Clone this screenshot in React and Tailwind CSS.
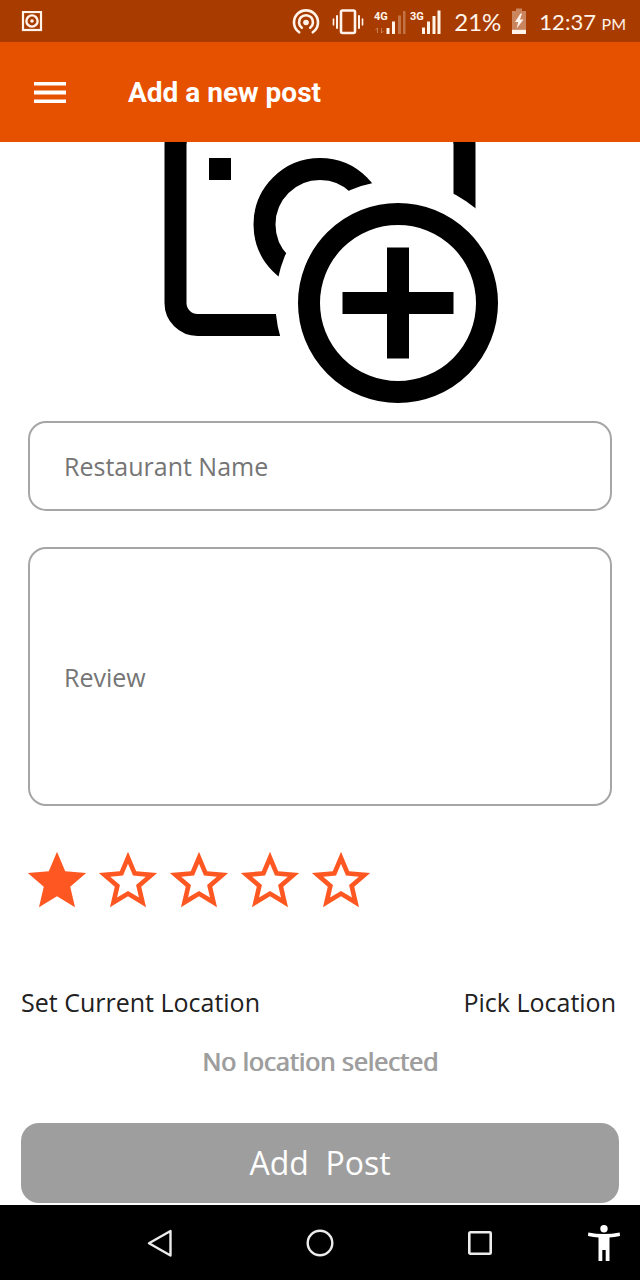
import { useState } from "react";

const STAR_FULL =
  "M12 17.27L18.18 21l-1.64-7.03L22 9.24l-7.19-.61L12 2 9.19 8.63 2 9.24l5.46 4.73L5.82 21z";
const STAR_EMPTY =
  "M22 9.24l-7.19-.62L12 2 9.19 8.63 2 9.24l5.46 4.73L5.82 21 12 17.27 18.18 21l-1.63-7.03L22 9.24zM12 15.4l-3.76 2.27 1-4.28-3.32-2.88 4.38-.38L12 6.1l1.71 4.04 4.38.38-3.32 2.88 1 4.28L12 15.4z";

function StatusBar() {
  return (
    <div className="flex h-[42px] items-center bg-[#a83c00] pl-[21px] pr-3.5 pt-0.5 text-[#fff3ea]">
      <svg width="22" height="22" viewBox="0 0 22 22" fill="none" stroke="currentColor" aria-hidden="true">
        <rect x="2" y="1" width="18" height="18" strokeWidth="2.200" />
        <circle cx="11" cy="10" r="5.600" strokeWidth="2.400" />
        <circle cx="11" cy="10" r="1.800" fill="currentColor" stroke="none" />
      </svg>
      <div className="ml-auto flex items-center">
        <svg width="28" height="28" viewBox="0 0 28 28" fill="none" stroke="currentColor" strokeWidth="2.600" strokeLinecap="round" aria-hidden="true">
          <path d="M7.200 24.300A12 12 0 1 1 20.800 24.300" />
          <path d="M9.800 19.800A7 7 0 1 1 18.200 19.800" />
          <circle cx="14" cy="14.500" r="2.800" fill="currentColor" stroke="none" />
        </svg>
        <svg className="ml-3" width="32" height="28" viewBox="0 0 32 28" fill="none" stroke="currentColor" strokeWidth="2" strokeLinecap="round" aria-hidden="true">
          <rect x="9" y="2.500" width="14" height="22.500" rx="1.500" strokeWidth="2.600" />
          <path d="M5 8v12M27 8v12" />
          <path d="M1.500 11v6M30.500 11v6" strokeWidth="1.600" />
        </svg>
        <svg className="ml-2.5" width="68" height="28" viewBox="0 0 68 28" fill="currentColor" aria-label="Signal strength">
          <text x="0" y="12" fontSize="11" className="font-['Roboto',sans-serif] font-bold">4G</text>
          <path d="M12.500 20h3v6h-3zM18 13.500h3v12.500h-3z" />
          <path d="M24 7.500h3v18.500h-3zM29 3h2.500v23h-2.500z" opacity=".3" />
          <path d="M3.500 20v5M1.500 22l2-2M7.500 20v5l2-2" fill="none" stroke="currentColor" strokeWidth="1" opacity=".35" />
          <text x="36" y="12" fontSize="11" className="font-['Roboto',sans-serif] font-bold">3G</text>
          <path d="M48 19.500h3v6.500h-3zM53 13.500h3v12.500h-3zM58.500 8h3v18h-3zM63.500 2.500h3v23.500h-3z" />
        </svg>
        <span className="ml-3 font-['Lato',sans-serif] text-[24px] leading-none">21%</span>
        <svg className="ml-2.5" width="16" height="28" viewBox="0 0 16 28" fill="currentColor" aria-label="Charging">
          <path d="M1 3h4V.5h6V3h4v18H1z" opacity=".4" />
          <path d="M1 21.500h14V26H1z" />
          <path d="M9.500 5.500L4 14h3.200l-1.500 6.500 6.800-9H9L11 5.500z" />
        </svg>
        <span className="ml-3 font-['Lato',sans-serif] text-[22px] leading-none">
          12:37 <span className="text-[16px]">PM</span>
        </span>
      </div>
    </div>
  );
}

function AppBar() {
  return (
    <header className="flex h-[100px] items-center bg-[#e65100] px-8 pt-0.5 text-white">
      <button type="button" aria-label="Open menu" className="flex">
        <svg width="36" height="36" viewBox="0 0 36 36" fill="currentColor" aria-hidden="true">
          <path d="M2 7h32v3.500H2zM2 15.500h32v4H2zM2 24.500h32v3.500H2z" />
        </svg>
      </button>
      <h1 className="ml-[60px] font-['Roboto',sans-serif] text-[28px] font-bold leading-8">Add a new post</h1>
    </header>
  );
}

function AddPhotoIcon() {
  return (
    <svg width="356" height="261" viewBox="142 142 356 261" fill="none" stroke="#000" strokeWidth="22" aria-hidden="true">
      <rect x="175.500" y="123" width="289" height="202" rx="22" />
      <circle cx="320" cy="224.500" r="55.500" />
      <path d="M209 158h22v22h-22z" fill="#000" stroke="none" />
      <circle cx="398" cy="303" r="122.500" fill="#fff" stroke="none" />
      <circle cx="398" cy="303" r="89" />
      <path d="M398 247.500v111M342.500 303h111" />
    </svg>
  );
}

function Rating() {
  const [rating, setRating] = useState(1);
  return (
    <div role="group" aria-label="Rating" className="mt-10 flex gap-px px-[22px]">
      {[1, 2, 3, 4, 5].map((n) => (
        <button key={n} type="button" aria-label={`${n} stars`} aria-pressed={n <= rating} onClick={() => setRating(n)}>
          <svg width="70" height="70" viewBox="0 0 24 24" fill="#ff5722" aria-hidden="true">
            <path d={n <= rating ? STAR_FULL : STAR_EMPTY} />
          </svg>
        </button>
      ))}
    </div>
  );
}

function NavBar() {
  return (
    <nav className="grid h-[75px] grid-cols-8 items-center bg-black text-[#ececec]">
      <button type="button" aria-label="Back" className="col-span-2 col-start-2 flex justify-center">
        <svg width="28" height="28" viewBox="0 0 28 28" fill="none" stroke="currentColor" strokeWidth="2.400" strokeLinejoin="round" aria-hidden="true">
          <path d="M24.500 2v24.500L3 14.250z" />
        </svg>
      </button>
      <button type="button" aria-label="Home" className="col-span-2 flex justify-center">
        <svg width="28" height="28" viewBox="0 0 28 28" fill="none" stroke="currentColor" strokeWidth="2.400" aria-hidden="true">
          <circle cx="14" cy="14" r="12.300" />
        </svg>
      </button>
      <button type="button" aria-label="Recent apps" className="col-span-2 flex justify-center">
        <svg width="28" height="28" viewBox="0 0 28 28" fill="none" stroke="currentColor" strokeWidth="2.600" aria-hidden="true">
          <rect x="3.300" y="3.300" width="21.400" height="21.400" rx="1" />
        </svg>
      </button>
      <button type="button" aria-label="Accessibility" className="flex justify-end pr-5 text-white">
        <svg width="32" height="38" viewBox="0 0 32 38" fill="currentColor" aria-hidden="true">
          <circle cx="16" cy="4.700" r="3.700" />
          <path d="M.3 8.500Q16 11.500 31.700 8.500L32 12Q26.500 13 21.500 13.500V37H17.700V26H14.300V37H10.500V13.500Q5.500 13 0 12z" />
        </svg>
      </button>
    </nav>
  );
}

export default function App() {
  return (
    <div className="flex min-h-screen flex-col bg-white font-['Open_Sans',sans-serif]">
      <StatusBar />
      <AppBar />
      <main className="flex flex-1 flex-col">
        <button type="button" aria-label="Add photo" className="flex justify-center">
          <AddPhotoIcon />
        </button>
        <div className="mt-[18px] flex flex-col gap-9 px-7">
          <input
            type="text"
            aria-label="Restaurant Name"
            placeholder="Restaurant Name"
            className="h-[90px] w-full rounded-[18px] border-2 border-[#a6a6a6] px-[34px] text-[25px] text-[#212121] outline-none placeholder:text-[#757575]"
          />
          <textarea
            aria-label="Review"
            placeholder="Review"
            className="block h-[259px] w-full resize-none rounded-[18px] border-2 border-[#a6a6a6] px-[34px] py-[112px] text-[25px] leading-8 text-[#212121] outline-none placeholder:text-[#757575]"
          />
        </div>
        <Rating />
        <div className="mt-[70px] flex justify-between pl-[21px] pr-6 text-[25px] leading-8 text-[#212121]">
          <button type="button">Set Current Location</button>
          <button type="button">Pick Location</button>
        </div>
        <p className="mt-[27px] text-center text-[25px] leading-8 text-[#9e9e9e] [text-shadow:1px_0_0_#9e9e9e]">No location selected</p>
        <div className="mt-[46px] px-[21px] pb-0.5">
          <button type="button" className="h-20 w-full whitespace-pre rounded-[18px] bg-[#9e9e9e] text-[32px] text-white">
            {"Add  Post"}
          </button>
        </div>
      </main>
      <NavBar />
    </div>
  );
}
